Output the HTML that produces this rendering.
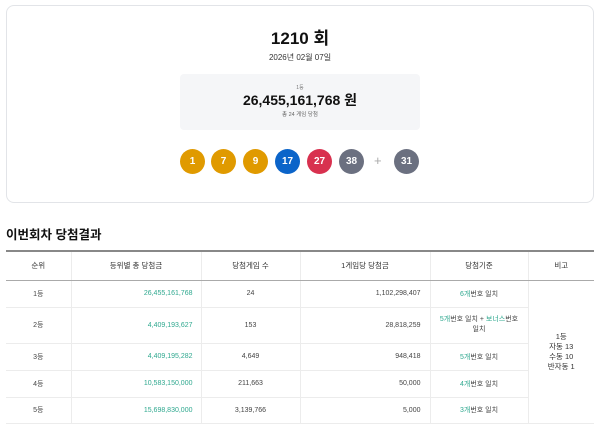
<!DOCTYPE html>
<html><head><meta charset="utf-8"><style>
*{margin:0;padding:0;box-sizing:border-box}
body{width:600px;height:427px;overflow:hidden;background:#fff;font-family:"Liberation Sans","Noto Sans CJK KR",sans-serif;color:#222}
.card{position:absolute;left:6px;top:5px;width:588px;height:198px;border:1px solid #e2e4e8;border-radius:8px}
.t1{position:absolute;left:0;width:600px;text-align:center}
.box{position:absolute;left:180px;top:74px;width:240px;height:56px;background:#f5f6f8;border-radius:4px;text-align:center}
.ball{position:absolute;top:149px;width:25px;height:25px;border-radius:50%;color:#fff;font-size:10px;font-weight:bold;text-align:center;line-height:25px}
.o{background:#e09a00}.b{background:#0b64c9}.r{background:#d8314f}.g{background:#6b7080}
table{position:absolute;left:6px;top:250px;width:588px;border-collapse:collapse;font-size:7px;color:#444}
th,td{border-bottom:1px solid #ececec;border-left:1px solid #ececec;text-align:center;font-weight:normal}
th:first-child,td:first-child{border-left:none}
thead tr{border-top:2px solid #888}
th{height:29px;border-bottom:1px solid #aaa;font-size:7.5px;color:#333}
.m{color:#2fa88f;text-align:right;padding-right:8px}
.n{text-align:right;padding-right:9px}
.tc{color:#2fa88f}
</style></head><body>
<div class="card"></div>
<div class="t1" style="top:24px;font-size:17px;font-weight:bold;color:#111">1210 회</div>
<div class="t1" style="top:52px;font-size:8px;color:#333">2026년 02월 07일</div>
<div class="box">
<div style="margin-top:10px;font-size:5px;color:#777">1등</div>
<div style="font-size:14px;font-weight:bold;color:#111;line-height:18px">26,455,161,768 원</div>
<div style="font-size:5.5px;color:#666;margin-top:1px">총 24 게임 당첨</div>
</div>
<div class="ball o" style="left:180px">1</div>
<div class="ball o" style="left:211px">7</div>
<div class="ball o" style="left:243px">9</div>
<div class="ball b" style="left:275px">17</div>
<div class="ball r" style="left:307px">27</div>
<div class="ball g" style="left:339px">38</div>
<div style="position:absolute;left:374px;top:153px;font-size:13px;color:#aaa">+</div>
<div class="ball g" style="left:394px">31</div>
<div style="position:absolute;left:6px;top:224px;font-size:12.5px;font-weight:bold;color:#111">이번회차 당첨결과</div>
<table>
<colgroup><col style="width:65px"><col style="width:130px"><col style="width:99px"><col style="width:130px"><col style="width:98px"><col style="width:66px"></colgroup>
<thead><tr><th>순위</th><th>등위별 총 당첨금</th><th>당첨게임 수</th><th>1게임당 당첨금</th><th>당첨기준</th><th>비고</th></tr></thead>
<tbody>
<tr style="height:27px"><td>1등</td><td class="m">26,455,161,768</td><td>24</td><td class="n">1,102,298,407</td><td><span class="tc">6개</span>번호 일치</td><td rowspan="5" style="font-size:7.5px;color:#333;line-height:10px">1등<br>자동 13<br>수동 10<br>반자동 1</td></tr>
<tr style="height:36px"><td>2등</td><td class="m">4,409,193,627</td><td>153</td><td class="n">28,818,259</td><td style="line-height:10px"><span class="tc">5개</span>번호 일치 + <span class="tc">보너스</span>번호<br>일치</td></tr>
<tr style="height:27px"><td>3등</td><td class="m">4,409,195,282</td><td>4,649</td><td class="n">948,418</td><td><span class="tc">5개</span>번호 일치</td></tr>
<tr style="height:27px"><td>4등</td><td class="m">10,583,150,000</td><td>211,663</td><td class="n">50,000</td><td><span class="tc">4개</span>번호 일치</td></tr>
<tr style="height:26px"><td>5등</td><td class="m">15,698,830,000</td><td>3,139,766</td><td class="n">5,000</td><td><span class="tc">3개</span>번호 일치</td></tr>
</tbody></table>
</body></html>
